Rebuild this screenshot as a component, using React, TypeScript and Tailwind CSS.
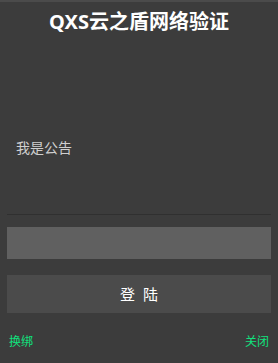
import React from "react";

export default function App() {
  return (
    <div
      className="w-[278px] h-[363px] bg-[#3c3c3c] flex flex-col overflow-hidden"
      style={{ fontFamily: '"Noto Sans", "Noto Sans CJK SC", sans-serif' }}
    >
      <div className="h-[2px] bg-[#4b4b4b]" />
      <div className="h-[40px] flex items-center justify-center text-white font-bold text-[20px] leading-none">
        QXS云之盾网络验证
      </div>
      <div className="h-[172px] pt-[96px] pl-[16px] text-[14px] leading-[20px] text-[#cfcfcf]">
        我是公告
      </div>
      <div className="mx-[7px] h-px bg-[#303030]" />
      <div className="mx-[7px] mt-[12px] h-[32px] bg-[#606060]" />
      <button className="mx-[7px] mt-[16px] h-[38px] bg-[#4b4b4b] text-white text-[15px] flex items-center justify-center">
        登&nbsp;&nbsp;陆
      </button>
      <div className="mt-[21px] px-[9px] flex justify-between text-[12px] leading-[16px] text-[#10e27e]">
        <span>换绑</span>
        <span>关闭</span>
      </div>
    </div>
  );
}
